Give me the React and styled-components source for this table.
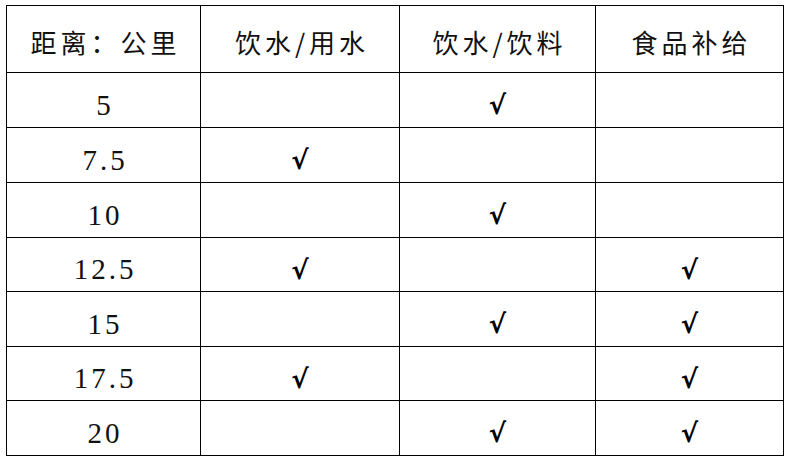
import { Fragment } from "react";
import styled, { createGlobalStyle } from "styled-components";

const GlobalStyle = createGlobalStyle`
  html, body {
    margin: 0;
    padding: 0;
    background: #ffffff;
  }
`;

const Page = styled.div`
  padding: 5px 0 0 6px;
`;

const Grid = styled.div`
  display: grid;
  grid-template-columns: 194px 199px 196px 188px;
  grid-template-rows: 67px 55px 55px 55px 54px 55px 54px 55px;
  width: max-content;
  border-top: 1px solid #000;
  border-left: 1px solid #000;
`;

const Cell = styled.div`
  display: flex;
  align-items: center;
  justify-content: center;
  border-right: 1px solid #000;
  border-bottom: 1px solid #000;
  color: #111;
  box-sizing: border-box;
`;

const HeadText = styled.span`
  font-family: "Noto Sans CJK SC", sans-serif;
  font-size: 26px;
  letter-spacing: 4px;
  padding-left: 4px;
  padding-top: 6px;
  line-height: 1;
`;

const Km = styled.span`
  font-family: "Liberation Serif", serif;
  font-size: 29px;
  letter-spacing: 3px;
  padding-left: 3px;
  padding-top: 10px;
  line-height: 1;
`;

const Check = styled.span`
  font-family: "DejaVu Sans", sans-serif;
  font-size: 26px;
  font-weight: bold;
  padding-top: 10px;
  line-height: 1;
  color: #000;
`;

const headers = ["距离：公里", "饮水/用水", "饮水/饮料", "食品补给"];

const rows = [
  ["5", false, true, false],
  ["7.5", true, false, false],
  ["10", false, true, false],
  ["12.5", true, false, true],
  ["15", false, true, true],
  ["17.5", true, false, true],
  ["20", false, true, true],
];

export default function App() {
  return (
    <>
      <GlobalStyle />
      <Page>
        <Grid>
          {headers.map((h) => (
            <Cell key={h}>
              <HeadText>{h}</HeadText>
            </Cell>
          ))}
          {rows.map(([km, ...marks]) => (
            <Fragment key={km}>
              <Cell>
                <Km>{km}</Km>
              </Cell>
              {marks.map((m, i) => (
                <Cell key={i}>{m && <Check>√</Check>}</Cell>
              ))}
            </Fragment>
          ))}
        </Grid>
      </Page>
    </>
  );
}
